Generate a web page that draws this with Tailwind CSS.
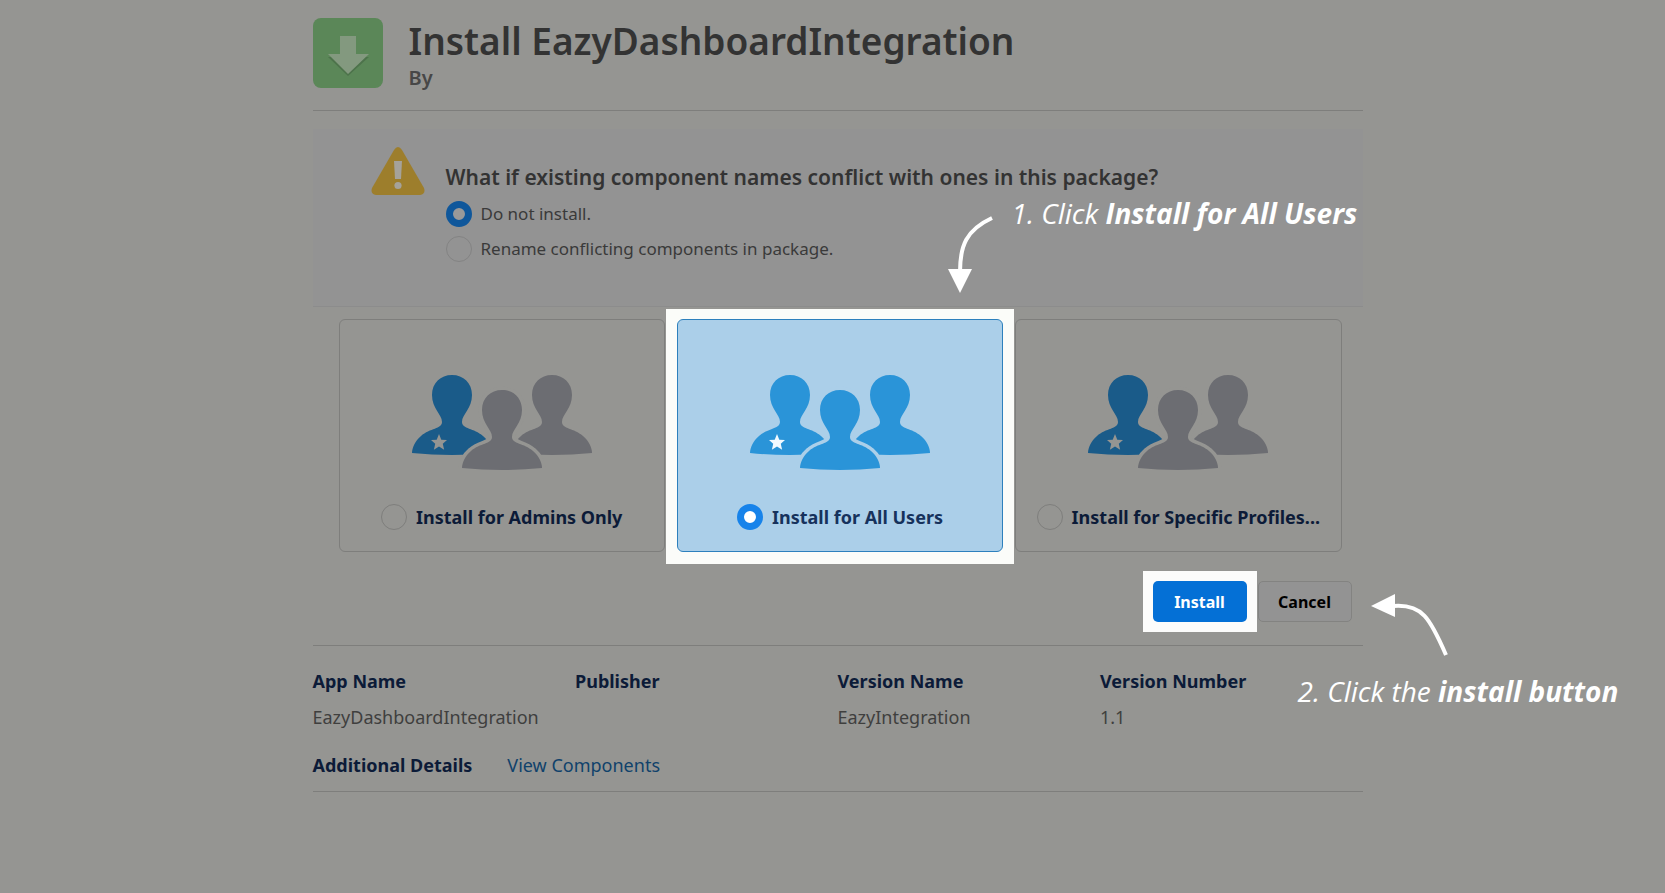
<!DOCTYPE html>
<html lang="en">
<head>
<meta charset="utf-8">
<meta name="viewport" content="width=device-width, initial-scale=1">
<title>Install EazyDashboardIntegration</title>
<script src="https://cdn.jsdelivr.net/npm/@tailwindcss/browser@4"></script>
</head>
<body class="min-h-screen overflow-x-hidden bg-[#959592] font-['Noto_Sans',sans-serif] text-[#333333]">
<svg class="hidden" aria-hidden="true">
  <symbol id="person" viewBox="0 0 80 80" overflow="visible">
    <path d="M40 0C51.500 0 60 8 60 20C60 34 50 39 50 47C50 54 62 53 71 61C77 66 80 73 80 78Q60 80 40 80Q20 80 0 78C0 73 3 66 9 61C18 53 30 54 30 47C30 39 20 34 20 20C20 8 28.500 0 40 0Z"/>
  </symbol>
  <symbol id="star" viewBox="0 0 14 14">
    <path d="M7 0L9 5L14 5.300L10.300 8.600L11.500 13.800L7 11L2.500 13.800L3.700 8.600L0 5.300L5 5Z"/>
  </symbol>
</svg>

<main class="relative left-[5px] mx-auto w-full max-w-[1050px]">
  <header class="flex h-[111px] gap-[26px] border-b border-[#7e7e7c] pt-[18px]">
    <svg class="size-[70px] shrink-0" viewBox="0 0 70 70" aria-hidden="true">
      <rect width="70" height="70" rx="8" fill="#5b8758"/>
      <path d="M27 21H43V39H56L35 58L15 39H27Z" fill="#4d734b"/>
      <path d="M27 18H43V36H56L35 56L15 36H27Z" fill="#83997f"/>
    </svg>
    <div>
      <h1 class="text-[37px] leading-[46px] font-semibold">Install EazyDashboardIntegration</h1>
      <p class="text-[20px] leading-7 font-semibold text-[#474747]">By</p>
    </div>
  </header>

  <section class="mt-[18px] flex h-[178px] gap-[21px] border-b border-[#8c8c8c] bg-[#939393] pt-[18px] pl-[58px]">
    <svg class="h-12 w-[54px] shrink-0" viewBox="0 0 54 48" aria-hidden="true">
      <path d="M23 3Q27-3 31 3L53 41Q55 47 49 48H5Q-1 47 1 41Z" fill="#9d7e2c"/>
      <path d="M23 14H31L30 32H24Z" fill="#a5a29a"/><circle cx="27" cy="38.500" r="3.600" fill="#a5a29a"/>
    </svg>
    <fieldset class="pt-[15px]">
      <legend class="float-left text-[21px] leading-[30px] font-semibold whitespace-nowrap">What if existing component names conflict with ones in this package?</legend>
      <div class="clear-both flex flex-col gap-[9px] pt-[9px] text-[17px] leading-[26px] text-[#3a3a3a]">
        <label class="flex items-center gap-[9px]"><input type="radio" name="conflict" checked class="size-[26px] shrink-0 appearance-none rounded-full border border-[#838383] checked:border-[7px] checked:border-[#0f579b] checked:bg-[#999999]">Do not install.</label>
        <label class="flex items-center gap-[9px]"><input type="radio" name="conflict" class="size-[26px] shrink-0 appearance-none rounded-full border border-[#838383] checked:border-[7px] checked:border-[#0f579b] checked:bg-[#999999]">Rename conflicting components in package.</label>
      </div>
    </fieldset>
  </section>

  <fieldset aria-label="Install for" class="mt-3 grid grid-cols-3 gap-3 pr-[21px] pl-[26px] text-[18px] leading-[26px] font-bold text-[#0c1b38]">
    <label class="flex h-[233px] flex-col items-center rounded-md border border-[#7e7e7c] pt-[55px]">
      <svg class="h-[95px] w-[180px]" viewBox="0 0 180 95" aria-hidden="true">
        <use href="#person" x="0" y="0" width="80" height="80" fill="#1a5b89"/>
        <use href="#person" x="100" y="0" width="80" height="80" fill="#6c6d72"/>
        <use href="#person" x="50" y="15" width="80" height="80" fill="#959592" stroke="#959592" stroke-width="7"/>
        <use href="#person" x="50" y="15" width="80" height="80" fill="#6c6d72"/>
        <use href="#star" x="19" y="59" width="16" height="16" fill="#959592"/>
      </svg>
      <span class="mt-[34px] flex items-center gap-[9px]"><input type="radio" name="scope" class="size-[26px] appearance-none rounded-full border border-[#7e7e7c]">Install for Admins Only</span>
    </label>
    <!-- Highlighted choice: square white frame behind the card -->
    <div class="-mx-[11px] -mt-[10px] -mb-3 bg-[#fbfcf9] px-[11px] pt-[10px] pb-3">
      <label class="flex h-[233px] flex-col items-center rounded-md border border-[#2d80bd] bg-[#abcfe9] pt-[55px] text-[#16325c]">
        <svg class="h-[95px] w-[180px]" viewBox="0 0 180 95" aria-hidden="true">
          <g fill="#2a94d8">
            <use href="#person" x="0" y="0" width="80" height="80"/>
            <use href="#person" x="100" y="0" width="80" height="80"/>
            <use href="#person" x="50" y="15" width="80" height="80" fill="#abcfe9" stroke="#abcfe9" stroke-width="7"/>
            <use href="#person" x="50" y="15" width="80" height="80"/>
          </g>
          <use href="#star" x="19" y="59" width="16" height="16" fill="#f2faff"/>
        </svg>
        <span class="mt-[34px] flex items-center gap-[9px]"><input type="radio" name="scope" checked class="size-[26px] appearance-none rounded-full border-[7px] border-[#1783ea] bg-white">Install for All Users</span>
      </label>
    </div>
    <label class="flex h-[233px] flex-col items-center rounded-md border border-[#7e7e7c] pt-[55px]">
      <svg class="h-[95px] w-[180px]" viewBox="0 0 180 95" aria-hidden="true">
        <use href="#person" x="0" y="0" width="80" height="80" fill="#1a5b89"/>
        <use href="#person" x="100" y="0" width="80" height="80" fill="#6c6d72"/>
        <use href="#person" x="50" y="15" width="80" height="80" fill="#959592" stroke="#959592" stroke-width="7"/>
        <use href="#person" x="50" y="15" width="80" height="80" fill="#6c6d72"/>
        <use href="#star" x="19" y="59" width="16" height="16" fill="#959592"/>
      </svg>
      <span class="mt-[34px] flex items-center gap-[9px]"><input type="radio" name="scope" class="size-[26px] appearance-none rounded-full border border-[#7e7e7c]">Install for Specific Profiles...</span>
    </label>
  </fieldset>

  <div class="flex h-[94px] items-start justify-end gap-[1px] border-b border-[#7e7e7c] pt-[19px] pr-[11px] text-[16px] leading-6 font-bold">
    <div class="bg-[#fcfcfb] p-[10px]">
      <button type="button" class="block h-[41px] w-[94px] rounded-[5px] bg-[#0470d6] text-white">Install</button>
    </div>
    <button type="button" class="mt-[10px] h-[41px] w-[94px] rounded-[5px] border border-[#838381] bg-[#939393] text-black">Cancel</button>
  </div>

  <section class="border-b border-[#7e7e7c] pt-[17px] pb-3 text-[18px]">
    <table class="w-full table-fixed text-left">
      <thead>
        <tr class="h-9 text-[#0c1b38]">
          <th class="font-bold">App Name</th><th class="font-bold">Publisher</th><th class="font-bold">Version Name</th><th class="font-bold">Version Number</th>
        </tr>
      </thead>
      <tbody>
        <tr class="h-9 text-[#3f3f3e]"><td>EazyDashboardIntegration</td><td></td><td>EazyIntegration</td><td>1.1</td></tr>
      </tbody>
    </table>
    <div class="mt-4 flex gap-[35px] leading-7">
      <h2 class="font-bold text-[#0c1b38]">Additional Details</h2>
      <a href="#components" class="text-[#10426b]">View Components</a>
    </div>
  </section>

  <!-- Walkthrough annotations floating over the page -->
  <p class="absolute top-[193px] left-[699px] font-['Open_Sans',sans-serif] text-[28px] leading-10 whitespace-nowrap text-white italic">1. Click <strong class="font-bold">Install for All Users</strong></p>
  <svg class="absolute top-[214px] left-[633px] h-20 w-[50px]" viewBox="0 0 50 80" aria-hidden="true">
    <path d="M46 4C20 16 14 32 14 58" fill="none" stroke="#fff" stroke-width="4"/>
    <path d="M2 55H26L14 79Z" fill="#fff"/>
  </svg>
  <p class="absolute top-[671px] left-[985px] font-['Open_Sans',sans-serif] text-[28px] leading-10 whitespace-nowrap text-white italic">2. Click the <strong class="font-bold">install button</strong></p>
  <svg class="absolute top-[590px] left-[1057px] h-[70px] w-20" viewBox="0 0 80 70" aria-hidden="true">
    <path d="M24 16C52 14 60 28 76 65" fill="none" stroke="#fff" stroke-width="4"/>
    <path d="M1 16L25 4V27Z" fill="#fff"/>
  </svg>
</main>
</body>
</html>
